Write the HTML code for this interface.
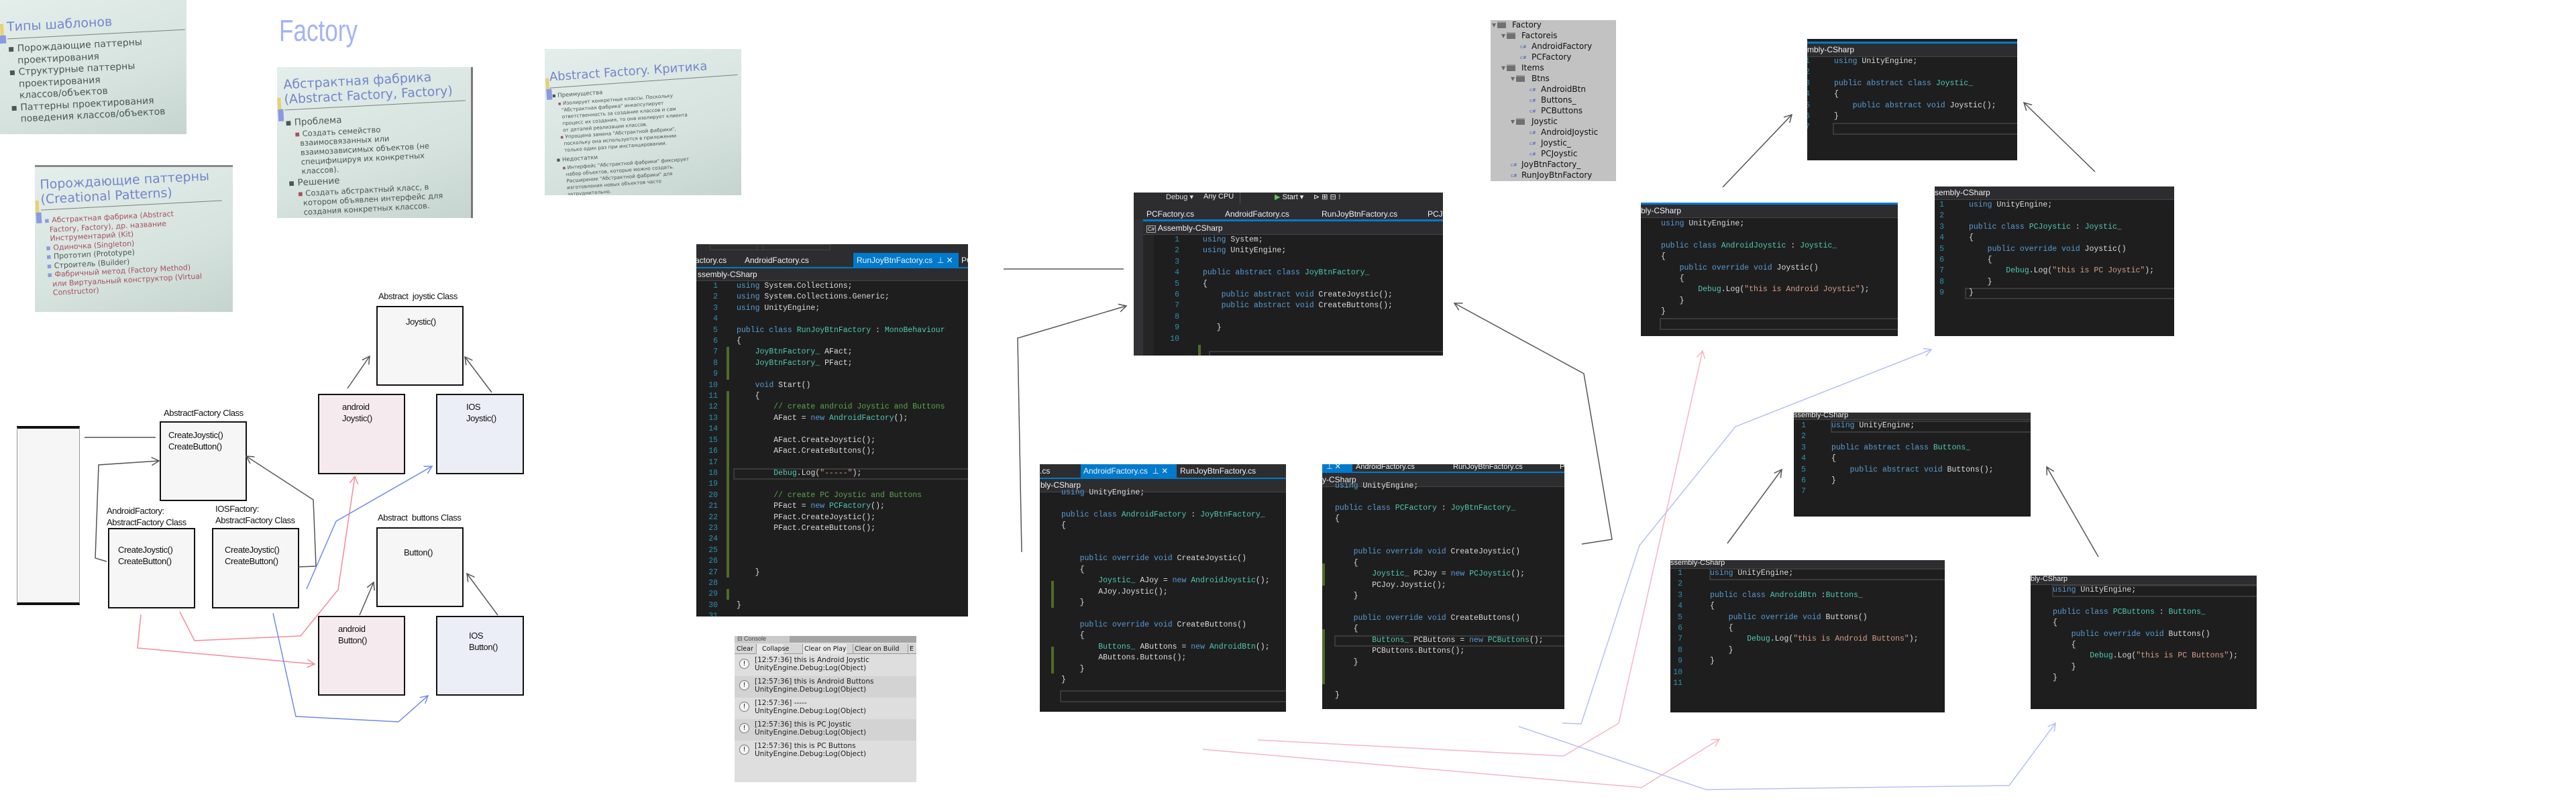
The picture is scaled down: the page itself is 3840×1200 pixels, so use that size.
<!DOCTYPE html>
<html><head><meta charset="utf-8">
<style>
*{margin:0;padding:0;box-sizing:border-box}
body{width:3840px;height:1200px;background:#fff;position:relative;overflow:hidden;font-family:"Liberation Sans","DejaVu Sans",sans-serif}
.a{position:absolute}
.slide{position:absolute;overflow:hidden;background:linear-gradient(160deg,#e4eeea 0%,#d6e3df 60%,#c6d4d0 100%)}
.slide .in{position:absolute;left:0;top:0;width:100%;height:100%;transform-origin:0 0}
.st{color:#7385cc;font-family:"DejaVu Sans",sans-serif;white-space:nowrap;position:absolute}
.sb{color:#4c5654;font-family:"DejaVu Sans",sans-serif;white-space:nowrap;position:absolute}
.red{color:#a8505f}
.box{position:absolute;border:2px solid #111;background:#f6f6f6}
.lbl{position:absolute;font-size:13px;color:#111;white-space:nowrap;letter-spacing:-.4px}
.cw{position:absolute;background:#1e1e1e;overflow:hidden;color:#dcdcdc}
.cw pre{position:absolute;font-family:"Liberation Mono",monospace;font-size:11.5px;line-height:16.4px;white-space:pre}
.cw .num{color:#2b91af;text-align:right}
.bar{position:absolute;left:0;right:0;background:#2d2d30;color:#f1f1f1;font-size:12px;white-space:nowrap;padding-left:2px}
.blue{position:absolute;left:0;right:0;height:2px;background:#007acc}
.tabs{position:absolute;left:0;right:0;background:#2d2d30;color:#f1f1f1;font-size:12px;white-space:nowrap}
.tabs span{position:absolute}
.act{background:#007acc}
.k{color:#569cd6}.t{color:#4ec9b0}.s{color:#d69d85}.c{color:#57a64a}
.g{position:absolute;width:4px;background:#4f6b28}
.hl{position:absolute;border:2px solid #3a3a3a}
.tree div{position:absolute;font-size:12px;color:#111;white-space:nowrap;font-family:"DejaVu Sans",sans-serif}
.fo{display:inline-block;width:13px;height:10px;background:#707070;border-top:2px solid #9a9a9a;vertical-align:-1px;margin-left:2px}
.con div.e{position:absolute;left:0;right:0;height:32px;font-size:10.5px;font-family:"DejaVu Sans",sans-serif;color:#222}
</style></head><body>

<!-- Slide 1 -->
<div class="slide" style="left:0;top:0;width:278px;height:200px">
 <div class="in" style="transform:rotate(-3deg) translate(-4px,8px)">
  <div class="a" style="left:2px;top:28px;width:5px;height:20px;background:#e8d070"></div>
  <div class="a" style="left:0;top:45px;width:10px;height:12px;background:#8a9ae0"></div>
  <div class="st" style="left:12px;top:22px;font-size:19px">Типы шаблонов</div>
  <div class="a" style="left:12px;top:50px;width:265px;height:1px;background:#7a807e"></div>
  <div class="sb" style="left:12px;top:58px;font-size:14px;line-height:17.5px">▪ Порождающие паттерны<br>&nbsp;&nbsp;&nbsp;проектирования<br>▪ Структурные паттерны<br>&nbsp;&nbsp;&nbsp;проектирования<br>&nbsp;&nbsp;&nbsp;классов/объектов<br>▪ Паттерны проектирования<br>&nbsp;&nbsp;&nbsp;поведения классов/объектов</div>
 </div>
</div>

<div class="a" style="left:416px;top:20px;font-size:45px;color:#a5b3f2;transform:scaleX(.78);transform-origin:0 0;font-family:'Liberation Sans',sans-serif">Factory</div>

<!-- Slide 2 -->
<div class="slide" style="left:413px;top:100px;width:292px;height:225px;border-right:3px solid #777">
 <div class="in" style="transform:rotate(-3deg) translate(-4px,8px)">
  <div class="a" style="left:2px;top:38px;width:5px;height:18px;background:#e8d070"></div>
  <div class="a" style="left:2px;top:55px;width:8px;height:18px;background:#8a9ae0"></div>
  <div class="st" style="left:12px;top:8px;font-size:19px;line-height:22px">Абстрактная фабрика<br>(Abstract Factory, Factory)</div>
  <div class="a" style="left:12px;top:56px;width:270px;height:1px;background:#7a807e"></div>
  <div class="sb" style="left:12px;top:68px;font-size:13.5px;line-height:16px">▪ Проблема</div>
  <div class="sb" style="left:25px;top:86px;font-size:11.5px;line-height:14px"><span class="red">▪</span> Создать семейство<br>&nbsp;&nbsp;взаимосвязанных или<br>&nbsp;&nbsp;взаимозависимых объектов (не<br>&nbsp;&nbsp;специфицируя их конкретных<br>&nbsp;&nbsp;классов).</div>
  <div class="sb" style="left:12px;top:158px;font-size:13.5px">▪ Решение</div>
  <div class="sb" style="left:25px;top:175px;font-size:11.5px;line-height:14px"><span class="red">▪</span> Создать абстрактный класс, в<br>&nbsp;&nbsp;котором объявлен интерфейс для<br>&nbsp;&nbsp;создания конкретных классов.</div>
 </div>
</div>

<!-- Slide 3 -->
<div class="slide" style="left:812px;top:73px;width:293px;height:218px">
 <div class="in" style="transform:rotate(-4deg) translate(-4px,14px)">
  <div class="a" style="left:2px;top:30px;width:5px;height:18px;background:#e8d070"></div>
  <div class="a" style="left:2px;top:46px;width:8px;height:16px;background:#8a9ae0"></div>
  <div class="st" style="left:8px;top:18px;font-size:18px">Abstract Factory. Критика</div>
  <div class="a" style="left:8px;top:44px;width:280px;height:1px;background:#7a807e"></div>
  <div class="sb" style="left:10px;top:52px;font-size:8.5px;line-height:10.5px">▪ Преимущества</div>
  <div class="sb" style="left:18px;top:64px;font-size:7.3px;line-height:10px"><span class="red">▪</span> Изолирует конкретные классы. Поскольку<br>&nbsp;&nbsp;"Абстрактная фабрика" инкапсулирует<br>&nbsp;&nbsp;ответственность за создание классов и сам<br>&nbsp;&nbsp;процесс их создания, то она изолирует клиента<br>&nbsp;&nbsp;от деталей реализации классов.<br><span class="red">▪</span> Упрощена замена "Абстрактной фабрики",<br>&nbsp;&nbsp;поскольку она используется в приложении<br>&nbsp;&nbsp;только один раз при инстанцировании.</div>
  <div class="sb" style="left:10px;top:148px;font-size:8.5px">▪ Недостатки</div>
  <div class="sb" style="left:18px;top:160px;font-size:7.3px;line-height:10px"><span class="red">▪</span> Интерфейс "Абстрактной фабрики" фиксирует<br>&nbsp;&nbsp;набор объектов, которые можно создать.<br>&nbsp;&nbsp;Расширение "Абстрактной фабрики" для<br>&nbsp;&nbsp;изготовления новых объектов часто<br>&nbsp;&nbsp;затруднительно.</div>
 </div>
</div>

<!-- Slide 4 -->
<div class="slide" style="left:52px;top:246px;width:295px;height:219px;border-top:3px solid #888">
 <div class="in" style="transform:rotate(-3deg) translate(-4px,10px)">
  <div class="a" style="left:2px;top:40px;width:5px;height:20px;background:#e8d070"></div>
  <div class="a" style="left:2px;top:58px;width:8px;height:16px;background:#8a9ae0"></div>
  <div class="st" style="left:10px;top:6px;font-size:19px;line-height:22px">Порождающие паттерны<br>(Creational Patterns)</div>
  <div class="a" style="left:10px;top:54px;width:270px;height:1px;background:#7a807e"></div>
  <div class="sb" style="left:14px;top:64px;font-size:11px;line-height:13.5px"><span style="color:#8a9ae0">▪</span> <span class="red">Абстрактная фабрика (Abstract<br>&nbsp;&nbsp;Factory, Factory), др. название<br>&nbsp;&nbsp;Инструментарий (Kit)</span><br><span style="color:#8a9ae0">▪</span> <span class="red">Одиночка (Singleton)</span><br><span style="color:#8a9ae0">▪</span> Прототип (Prototype)<br><span style="color:#8a9ae0">▪</span> Строитель (Builder)<br><span style="color:#8a9ae0">▪</span> <span class="red">Фабричный метод (Factory Method)<br>&nbsp;&nbsp;или Виртуальный конструктор (Virtual<br>&nbsp;&nbsp;Constructor)</span></div>
 </div>
</div>

<!-- Diagram -->
<div class="a" style="left:25px;top:635px;width:94px;height:267px;background:#f6f6f6;border-top:4px solid #111;border-bottom:4px solid #111;border-left:1px solid #999;border-right:1px solid #999"></div>
<div class="lbl" style="left:244px;top:608px">AbstractFactory Class</div>
<div class="box" style="left:238px;top:628px;width:130px;height:119px"><div class="lbl" style="left:11px;top:10px;line-height:17px">CreateJoystic()<br>CreateButton()</div></div>
<div class="lbl" style="left:159px;top:753px;line-height:17px">AndroidFactory:<br>AbstractFactory Class</div>
<div class="box" style="left:161px;top:787px;width:130px;height:120px"><div class="lbl" style="left:13px;top:22px;line-height:17px">CreateJoystic()<br>CreateButton()</div></div>
<div class="lbl" style="left:321px;top:750px;line-height:17px">IOSFactory:<br>AbstractFactory Class</div>
<div class="box" style="left:316px;top:787px;width:130px;height:120px"><div class="lbl" style="left:17px;top:22px;line-height:17px">CreateJoystic()<br>CreateButton()</div></div>
<div class="lbl" style="left:564px;top:434px">Abstract&nbsp; joystic Class</div>
<div class="box" style="left:561px;top:456px;width:130px;height:119px"><div class="lbl" style="left:42px;top:14px">Joystic()</div></div>
<div class="box" style="left:474px;top:587px;width:130px;height:120px;background:#f5ebef"><div class="lbl" style="left:34px;top:9px;line-height:17px">android<br>Joystic()</div></div>
<div class="box" style="left:650px;top:587px;width:131px;height:120px;background:#ebeef7"><div class="lbl" style="left:43px;top:9px;line-height:17px">IOS<br>Joystic()</div></div>
<div class="lbl" style="left:563px;top:764px">Abstract&nbsp; buttons Class</div>
<div class="box" style="left:561px;top:786px;width:130px;height:119px"><div class="lbl" style="left:39px;top:28px">Button()</div></div>
<div class="box" style="left:474px;top:918px;width:130px;height:119px;background:#f5ebef"><div class="lbl" style="left:28px;top:9px;line-height:17px">android<br>Button()</div></div>
<div class="box" style="left:650px;top:918px;width:131px;height:119px;background:#ebeef7"><div class="lbl" style="left:47px;top:19px;line-height:17px">IOS<br>Button()</div></div>

<!-- Window 1 RunJoyBtnFactory -->
<div class="cw" style="left:1038px;top:364px;width:405px;height:555px">
 <div class="tabs" style="top:0;height:34px;background:#2d2d30">
  <span style="left:20px;top:0;width:80px;height:9px;border:1px solid #444"></span>
  <span style="left:90px;top:0;width:110px;height:9px;border:1px solid #444"></span>
  <span style="left:-2px;top:17px">actory.cs</span>
  <span style="left:72px;top:17px">AndroidFactory.cs</span>
  <span class="act" style="left:234px;top:13px;width:157px;height:21px;padding:4px 0 0 5px">RunJoyBtnFactory.cs &nbsp;⊥ ✕</span>
  <span style="left:395px;top:17px">PC</span>
 </div>
 <div class="blue" style="top:34px"></div>
 <div class="bar" style="top:36px;height:19px;line-height:18px;border-bottom:1px solid #444">ssembly-CSharp</div>
 <div class="g" style="left:45px;top:153px;height:49px"></div>
 <div class="g" style="left:45px;top:219px;height:278px"></div>
 <div class="g" style="left:45px;top:514px;height:16px"></div>
 <div class="hl" style="left:55px;top:334px;width:360px;height:17px"></div>
 <pre class="num" style="left:0;top:55px;width:32px">1
2
3
4
5
6
7
8
9
10
11
12
13
14
15
16
17
18
19
20
21
22
23
24
25
26
27
28
29
30
31</pre>
 <pre style="left:60px;top:55px"><span class="k">using</span> System.Collections;
<span class="k">using</span> System.Collections.Generic;
<span class="k">using</span> UnityEngine;

<span class="k">public class</span> <span class="t">RunJoyBtnFactory</span> : <span class="t">MonoBehaviour</span>
{
    <span class="t">JoyBtnFactory_</span> AFact;
    <span class="t">JoyBtnFactory_</span> PFact;

    <span class="k">void</span> Start()
    {
        <span class="c">// create android Joystic and Buttons</span>
        AFact = <span class="k">new</span> <span class="t">AndroidFactory</span>();

        AFact.CreateJoystic();
        AFact.CreateButtons();

        <span class="t">Debug</span>.Log(<span class="s">"-----"</span>);

        <span class="c">// create PC Joystic and Buttons</span>
        PFact = <span class="k">new</span> <span class="t">PCFactory</span>();
        PFact.CreateJoystic();
        PFact.CreateButtons();



    }


}</pre>
</div>

<!-- Console -->
<div class="a con" style="left:1095px;top:948px;width:271px;height:218px;background:#dedede">
 <div class="a" style="left:0;top:0;width:271px;height:10px;background:#a5a5a5"></div>
 <div class="a" style="left:0;top:0;width:82px;height:11px;background:#c9c9c9;font-size:9px;line-height:9px;color:#444;padding-left:4px;overflow:hidden">⊟ Console</div>
 <div class="a" style="left:0;top:12px;width:271px;height:15px;background:#d6d6d6;border-bottom:1px solid #999;font-size:9.5px;line-height:15px;font-family:'DejaVu Sans',sans-serif;white-space:nowrap;color:#111">
  <span class="a" style="left:3px">Clear</span><span class="a" style="left:32px;border-left:1px solid #999;padding-left:8px;background:#e8e8e8;width:41px">Collapse</span><span class="a" style="left:101px;border-left:1px solid #999;padding-left:2px;background:#e8e8e8">Clear on Play</span><span class="a" style="left:176px;border-left:1px solid #999;padding-left:2px">Clear on Build</span><span class="a" style="left:258px;border-left:1px solid #999;padding-left:2px">E</span>
 </div>
 <div class="e" style="top:28px;background:#dedede"><span class="a" style="left:7px;top:6px;width:15px;height:15px;border:1px solid #777;border-radius:50%;background:#f4f4f4;font-size:10px;text-align:center;line-height:13px">!</span><span class="a" style="left:30px;top:2px;line-height:12px">[12:57:36] this is Android Joystic<br>UnityEngine.Debug:Log(Object)</span></div>
 <div class="e" style="top:60px;background:#d3d3d3"><span class="a" style="left:7px;top:6px;width:15px;height:15px;border:1px solid #777;border-radius:50%;background:#f4f4f4;font-size:10px;text-align:center;line-height:13px">!</span><span class="a" style="left:30px;top:2px;line-height:12px">[12:57:36] this is Android Buttons<br>UnityEngine.Debug:Log(Object)</span></div>
 <div class="e" style="top:92px;background:#dedede"><span class="a" style="left:7px;top:6px;width:15px;height:15px;border:1px solid #777;border-radius:50%;background:#f4f4f4;font-size:10px;text-align:center;line-height:13px">!</span><span class="a" style="left:30px;top:2px;line-height:12px">[12:57:36] -----<br>UnityEngine.Debug:Log(Object)</span></div>
 <div class="e" style="top:124px;background:#d3d3d3"><span class="a" style="left:7px;top:6px;width:15px;height:15px;border:1px solid #777;border-radius:50%;background:#f4f4f4;font-size:10px;text-align:center;line-height:13px">!</span><span class="a" style="left:30px;top:2px;line-height:12px">[12:57:36] this is PC Joystic<br>UnityEngine.Debug:Log(Object)</span></div>
 <div class="e" style="top:156px;background:#dedede"><span class="a" style="left:7px;top:6px;width:15px;height:15px;border:1px solid #777;border-radius:50%;background:#f4f4f4;font-size:10px;text-align:center;line-height:13px">!</span><span class="a" style="left:30px;top:2px;line-height:12px">[12:57:36] this is PC Buttons<br>UnityEngine.Debug:Log(Object)</span></div>
</div>

<!-- Window 2 JoyBtnFactory_ -->
<div class="cw" style="left:1690px;top:287px;width:461px;height:243px">
 <div class="tabs" style="top:0;height:40px;background:#2d2d30;font-size:11px">
  <span style="left:48px;top:0;color:#ddd">Debug ▾</span><span style="left:104px;top:0">Any CPU</span><span style="left:158px;top:0;width:1px;height:16px;background:#555"></span><span style="left:210px;top:0"><b style="color:#5c5">▶</b> Start ▾</span><span style="left:268px;top:0">⊳ ⊞ ⊟ ⁝</span>
  <span style="left:19px;top:25px;font-size:12px">PCFactory.cs</span>
  <span style="left:136px;top:25px;font-size:12px">AndroidFactory.cs</span>
  <span style="left:280px;top:25px;font-size:12px">RunJoyBtnFactory.cs</span>
  <span style="left:438px;top:25px;font-size:12px">PCJ</span>
 </div>
 <div class="blue" style="top:40px;left:14px;height:3px"></div>
 <div class="bar" style="top:43px;height:20px;line-height:20px;left:14px;padding-left:5px;border-bottom:1px solid #444"><span style="border:1px solid #aaa;font-size:8px;padding:0 1px">C#</span> Assembly-CSharp</div>
 <div class="a" style="left:0;top:40px;width:14px;height:203px;background:#333337"></div>
 <div class="a" style="left:14px;top:63px;width:16px;height:180px;background:#252526"></div>
 <div class="g" style="left:96px;top:227px;height:16px"></div>
 <div class="hl" style="left:112px;top:236px;width:360px;height:18px"></div>
 <pre class="num" style="left:40px;top:63px;width:28px">1
2
3
4
5
6
7
8
9
10</pre>
 <pre style="left:103px;top:63px"><span class="k">using</span> System;
<span class="k">using</span> UnityEngine;

<span class="k">public abstract class</span> <span class="t">JoyBtnFactory_</span>
{
    <span class="k">public abstract void</span> CreateJoystic();
    <span class="k">public abstract void</span> CreateButtons();

   }</pre>
</div>

<!-- Window 3 AndroidFactory -->
<div class="cw" style="left:1550px;top:692px;width:367px;height:369px">
 <div class="tabs" style="top:0;height:20px">
  <span style="left:0;top:3px">.cs</span>
  <span class="act" style="left:61px;top:0;width:143px;height:20px;padding:3px 0 0 4px">AndroidFactory.cs &nbsp;⊥ ✕</span>
  <span style="left:209px;top:3px">RunJoyBtnFactory.cs</span>
 </div>
 <div class="blue" style="top:20px"></div>
 <div class="bar" style="top:22px;height:20px;line-height:19px;border-bottom:1px solid #444;padding-left:1px">bly-CSharp</div>
 <div class="g" style="left:17px;top:174px;height:40px"></div>
 <div class="g" style="left:17px;top:272px;height:40px"></div>
 <div class="hl" style="left:30px;top:337px;width:360px;height:18px"></div>
 <pre style="left:32px;top:35px"><span class="k">using</span> UnityEngine;

<span class="k">public class</span> <span class="t">AndroidFactory</span> : <span class="t">JoyBtnFactory_</span>
{


    <span class="k">public override void</span> CreateJoystic()
    {
        <span class="t">Joystic_</span> AJoy = <span class="k">new</span> <span class="t">AndroidJoystic</span>();
        AJoy.Joystic();
    }

    <span class="k">public override void</span> CreateButtons()
    {
        <span class="t">Buttons_</span> AButtons = <span class="k">new</span> <span class="t">AndroidBtn</span>();
        AButtons.Buttons();
    }
}</pre>
</div>

<!-- Window 4 PCFactory -->
<div class="cw" style="left:1971px;top:692px;width:361px;height:365px">
 <div class="tabs" style="top:0;height:11px;font-size:11px;line-height:9px;overflow:hidden">
  <span class="act" style="left:0;top:0;width:45px;height:11px;padding-left:6px">⊥ ✕</span>
  <span style="left:50px;top:0">AndroidFactory.cs</span>
  <span style="left:195px;top:0">RunJoyBtnFactory.cs</span>
  <span style="left:354px;top:0">P</span>
 </div>
 <div class="blue" style="top:11px"></div>
 <div class="bar" style="top:13px;height:21px;line-height:20px;border-bottom:1px solid #444;padding-left:0">y-CSharp</div>
 <div class="g" style="left:0;top:148px;height:33px"></div>
 <div class="g" style="left:0;top:246px;height:82px"></div>
 <div class="hl" style="left:18px;top:255px;width:360px;height:17px"></div>
 <pre style="left:19px;top:25px"><span class="k">using</span> UnityEngine;

<span class="k">public class</span> <span class="t">PCFactory</span> : <span class="t">JoyBtnFactory_</span>
{


    <span class="k">public override void</span> CreateJoystic()
    {
        <span class="t">Joystic_</span> PCJoy = <span class="k">new</span> <span class="t">PCJoystic</span>();
        PCJoy.Joystic();
    }

    <span class="k">public override void</span> CreateButtons()
    {
        <span class="t">Buttons_</span> PCButtons = <span class="k">new</span> <span class="t">PCButtons</span>();
        PCButtons.Buttons();
    }


}</pre>
</div>

<!-- Tree -->
<div class="a tree" style="left:2222px;top:30px;width:187px;height:240px;background:#c2c2c2">
 <div style="left:2px;top:0;color:#666">▾<span class="fo"></span></div>
 <div style="left:32px;top:0">Factory</div>
 <div style="left:16px;top:16px;color:#666">▾<span class="fo"></span></div><div style="left:46px;top:16px">Factoreis</div>
 <div style="left:44px;top:36px;font-size:7px;color:#4663b0">c#</div><div style="left:61px;top:32px">AndroidFactory</div>
 <div style="left:44px;top:52px;font-size:7px;color:#4663b0">c#</div><div style="left:61px;top:48px">PCFactory</div>
 <div style="left:16px;top:64px;color:#666">▾<span class="fo"></span></div><div style="left:46px;top:64px">Items</div>
 <div style="left:30px;top:80px;color:#666">▾<span class="fo"></span></div><div style="left:61px;top:80px">Btns</div>
 <div style="left:58px;top:100px;font-size:7px;color:#4663b0">c#</div><div style="left:75px;top:96px">AndroidBtn</div>
 <div style="left:58px;top:116px;font-size:7px;color:#4663b0">c#</div><div style="left:75px;top:112px">Buttons_</div>
 <div style="left:58px;top:132px;font-size:7px;color:#4663b0">c#</div><div style="left:75px;top:128px">PCButtons</div>
 <div style="left:30px;top:144px;color:#666">▾<span class="fo"></span></div><div style="left:61px;top:144px">Joystic</div>
 <div style="left:58px;top:164px;font-size:7px;color:#4663b0">c#</div><div style="left:75px;top:160px">AndroidJoystic</div>
 <div style="left:58px;top:180px;font-size:7px;color:#4663b0">c#</div><div style="left:75px;top:176px">Joystic_</div>
 <div style="left:58px;top:196px;font-size:7px;color:#4663b0">c#</div><div style="left:75px;top:192px">PCJoystic</div>
 <div style="left:30px;top:212px;font-size:7px;color:#4663b0">c#</div><div style="left:46px;top:208px">JoyBtnFactory_</div>
 <div style="left:30px;top:228px;font-size:7px;color:#4663b0">c#</div><div style="left:46px;top:224px">RunJoyBtnFactory</div>
</div>

<!-- Window 6 Joystic_ -->
<div class="cw" style="left:2694px;top:58px;width:313px;height:181px">
 <div class="blue" style="top:4px;height:3px"></div>
 <div class="bar" style="top:7px;height:20px;line-height:19px;border-bottom:1px solid #444;padding-left:0">mbly-CSharp</div>
 <div class="hl" style="left:38px;top:125px;width:300px;height:18px"></div>
 <pre class="num" style="left:-6px;top:26px;width:10px">1
2
3
4
5
6
7</pre>
 <pre style="left:40px;top:26px"><span class="k">using</span> UnityEngine;

<span class="k">public abstract class</span> <span class="t">Joystic_</span>
{
    <span class="k">public abstract void</span> Joystic();
}</pre>
</div>

<!-- Window 7 AndroidJoystic -->
<div class="cw" style="left:2446px;top:302px;width:383px;height:199px">
 <div class="blue" style="top:0;height:3px"></div>
 <div class="bar" style="top:3px;height:20px;line-height:19px;border-bottom:1px solid #444;padding-left:0">bly-CSharp</div>
 <div class="hl" style="left:28px;top:172px;width:360px;height:18px"></div>
 <pre style="left:30px;top:24px"><span class="k">using</span> UnityEngine;

<span class="k">public class</span> <span class="t">AndroidJoystic</span> : <span class="t">Joystic_</span>
{
    <span class="k">public override void</span> Joystic()
    {
        <span class="t">Debug</span>.Log(<span class="s">"this is Android Joystic"</span>);
    }
}</pre>
</div>

<!-- Window 8 PCJoystic -->
<div class="cw" style="left:2884px;top:278px;width:357px;height:223px">
 <div class="bar" style="top:0;height:20px;line-height:19px;border-bottom:1px solid #444;padding-left:0">sembly-CSharp</div>
 <div class="hl" style="left:45px;top:151px;width:320px;height:17px"></div>
 <pre class="num" style="left:2px;top:20px;width:12px">1
2
3
4
5
6
7
8
9</pre>
 <pre style="left:51px;top:20px"><span class="k">using</span> UnityEngine;

<span class="k">public class</span> <span class="t">PCJoystic</span> : <span class="t">Joystic_</span>
{
    <span class="k">public override void</span> Joystic()
    {
        <span class="t">Debug</span>.Log(<span class="s">"this is PC Joystic"</span>);
    }
}</pre>
</div>

<!-- Window 9 Buttons_ -->
<div class="cw" style="left:2674px;top:615px;width:353px;height:155px">
 <div class="bar" style="top:0;height:11px;line-height:8px;font-size:11px;overflow:hidden;border-bottom:1px solid #444;padding-left:0">ssembly-CSharp</div>
 <div class="hl" style="left:55px;top:12px;width:310px;height:18px"></div>
 <pre class="num" style="left:8px;top:12px;width:10px">1
2
3
4
5
6
7</pre>
 <pre style="left:56px;top:12px"><span class="k">using</span> UnityEngine;

<span class="k">public abstract class</span> <span class="t">Buttons_</span>
{
    <span class="k">public abstract void</span> Buttons();
}</pre>
</div>

<!-- Window 10 AndroidBtn -->
<div class="cw" style="left:2490px;top:835px;width:409px;height:227px">
 <div class="bar" style="top:0;height:13px;line-height:8px;font-size:11px;overflow:hidden;border-bottom:1px solid #444;padding-left:0">ssembly-CSharp</div>
 <div class="hl" style="left:58px;top:12px;width:360px;height:18px"></div>
 <pre class="num" style="left:4px;top:12px;width:14px">1
2
3
4
5
6
7
8
9
10
11</pre>
 <pre style="left:59px;top:12px">
<span class="k">using</span> UnityEngine;

<span class="k">public class</span> <span class="t">AndroidBtn</span> :<span class="t">Buttons_</span>
{
    <span class="k">public override void</span> Buttons()
    {
        <span class="t">Debug</span>.Log(<span class="s">"this is Android Buttons"</span>);
    }
}</pre>
</div>

<!-- Window 11 PCButtons -->
<div class="cw" style="left:3027px;top:858px;width:337px;height:199px">
 <div class="bar" style="top:0;height:14px;line-height:10px;font-size:11px;overflow:hidden;border-bottom:1px solid #444;padding-left:0">bly-CSharp</div>
 <div class="hl" style="left:32px;top:14px;width:320px;height:18px"></div>
 <pre style="left:33px;top:14px"><span class="k">using</span> UnityEngine;

<span class="k">public class</span> <span class="t">PCButtons</span> : <span class="t">Buttons_</span>
{
    <span class="k">public override void</span> Buttons()
    {
        <span class="t">Debug</span>.Log(<span class="s">"this is PC Buttons"</span>);
    }
}</pre>
</div>

<!-- Lines & arrows -->
<svg class="a" style="left:0;top:0" width="3840" height="1200" viewBox="0 0 3840 1200" fill="none">
 <defs>
  <marker id="ag" markerWidth="14" markerHeight="14" refX="12" refY="7" orient="auto" markerUnits="userSpaceOnUse"><path d="M1,1 L12,7 L1,13" stroke="#555" stroke-width="1.5" fill="none"/></marker>
  <marker id="ap" markerWidth="14" markerHeight="14" refX="12" refY="7" orient="auto" markerUnits="userSpaceOnUse"><path d="M1,1 L12,7 L1,13" stroke="#f58a9c" stroke-width="1.5" fill="none"/></marker>
  <marker id="ab" markerWidth="14" markerHeight="14" refX="12" refY="7" orient="auto" markerUnits="userSpaceOnUse"><path d="M1,1 L12,7 L1,13" stroke="#7088f0" stroke-width="1.5" fill="none"/></marker>
  <marker id="ap2" markerWidth="14" markerHeight="14" refX="12" refY="7" orient="auto" markerUnits="userSpaceOnUse"><path d="M1,1 L12,7 L1,13" stroke="#f8b4c2" stroke-width="1.5" fill="none"/></marker>
  <marker id="ab2" markerWidth="14" markerHeight="14" refX="12" refY="7" orient="auto" markerUnits="userSpaceOnUse"><path d="M1,1 L12,7 L1,13" stroke="#b4c0f8" stroke-width="1.5" fill="none"/></marker>
 </defs>
 <g stroke="#555" stroke-width="1.5">
  <path d="M126,652 L232,652"/>
  <path d="M159,837 L142,832 L147,693 L237,687" marker-end="url(#ag)"/>
  <path d="M445,845 L471,844 L467,745 L367,680" marker-end="url(#ag)"/>
  <path d="M518,579 L551,531" marker-end="url(#ag)"/>
  <path d="M733,585 L693,532" marker-end="url(#ag)"/>
  <path d="M536,917 L557,868" marker-end="url(#ag)"/>
  <path d="M742,917 L696,855" marker-end="url(#ag)"/>
  <path d="M1496,401 L1675,401"/>
  <path d="M1523,823 L1517,504 L1679,456" marker-end="url(#ag)"/>
  <path d="M2358,811 L2403,804 L2361,557 L2168,452" marker-end="url(#ag)"/>
  <path d="M2568,279 L2671,171" marker-end="url(#ag)"/>
  <path d="M3123,256 L3017,153" marker-end="url(#ag)"/>
  <path d="M2575,810 L2656,700" marker-end="url(#ag)"/>
  <path d="M3128,830 L3051,696" marker-end="url(#ag)"/>
 </g>
 <g stroke-width="1.5">
  <path d="M268,912 L290,955 L448,948 L504,879 L529,710" stroke="#f58a9c" marker-end="url(#ap)"/>
  <path d="M210,916 L205,966 L469,990" stroke="#f58a9c" marker-end="url(#ap)"/>
  <path d="M457,878 L501,777 L644,695" stroke="#7088f0" marker-end="url(#ab)"/>
  <path d="M407,914 L441,1068 L594,1076 L638,1037" stroke="#7088f0" marker-end="url(#ab)"/>
  <path d="M1875,1103 L2331,1127 L2413,1078 L2538,523" stroke="#f8b4c2" marker-end="url(#ap2)"/>
  <path d="M1793,1117 L2447,1174 L2563,1102" stroke="#f8b4c2" marker-end="url(#ap2)"/>
  <path d="M2329,1078 L2357,1079 L2444,813 L2587,636 L2879,521" stroke="#b4c0f8" marker-end="url(#ab2)"/>
  <path d="M2264,1083 L2543,1177 L2995,1171 L3064,1078" stroke="#b4c0f8" marker-end="url(#ab2)"/>
 </g>
</svg>
</body></html>
